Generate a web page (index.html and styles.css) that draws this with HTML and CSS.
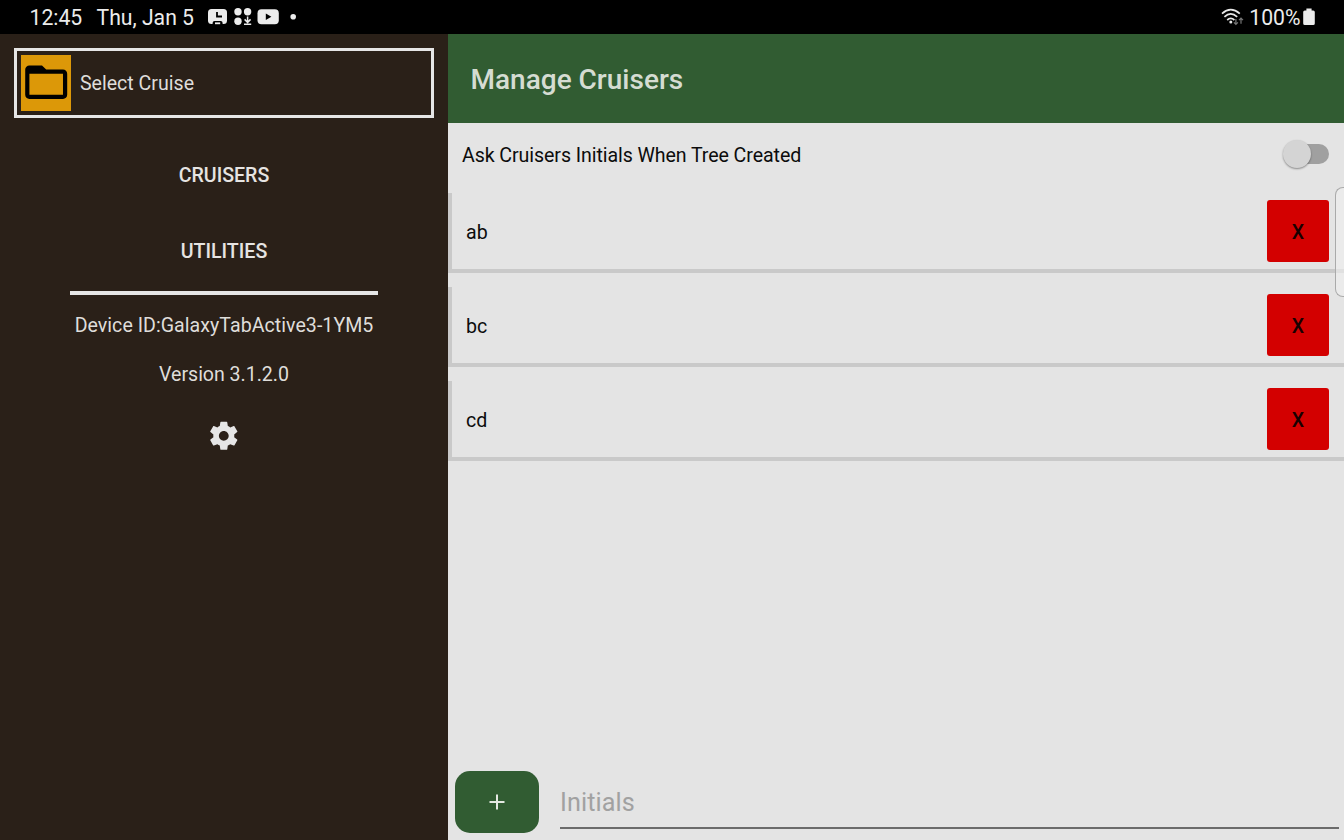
FILE: index.html
```html
<!DOCTYPE html>
<html lang="en">
<head>
<meta charset="utf-8">
<title>Manage Cruisers</title>
<link rel="stylesheet" href="styles.css">
</head>
<body>
<header class="status">
  <span class="clock">12:45</span>
  <span class="date">Thu, Jan 5</span>
  <svg class="notices" width="90" height="18" viewBox="0 0 90 18">
    <rect x="0" y="1" width="19" height="15" rx="3.5" fill="#ececec"/>
    <path d="M9 4v4.5h5" fill="none" stroke="#000" stroke-width="1.8"/>
    <path d="M4.6 16.5v-1.6a2 2 0 0 1 2-2h6a2 2 0 0 1 2 2v1.6z" fill="#000"/>
    <rect x="7" y="14.4" width="5.2" height="1.8" fill="#ececec"/>
    <g fill="#ececec"><circle cx="30" cy="3.8" r="3.7"/><circle cx="39.6" cy="3.8" r="3.7"/><circle cx="30" cy="13.2" r="3.7"/></g>
    <path d="M39.6 8.5v5.5M36.6 11.4l3 3 3-3M36 16.2h7.2" fill="none" stroke="#ececec" stroke-width="1.5"/>
    <rect x="49.5" y="1.2" width="21.3" height="15" rx="4" fill="#ececec"/>
    <path d="M57.8 5.5v6.4l5.6-3.2z" fill="#000"/>
    <circle cx="85.2" cy="8.8" r="2.8" fill="#ececec"/>
  </svg>
  <div class="system">
    <svg width="24" height="18" viewBox="0 0 24 18">
      <g fill="none" stroke="#e8e8e8" stroke-width="1.7">
        <path d="M1 5.600Q9.700-2.200 18.800 5.600"/><path d="M3.400 8.900Q9.700 3 16.200 8.900"/><path d="M6.200 12Q9.700 8.800 13.400 12"/>
      </g>
      <circle cx="9.8" cy="14" r="1.5" fill="#e8e8e8"/>
      <path d="M14.900 11v5.500M12.900 14.400l2 2 2-2M20 15.800v-5.600M18 12.200l2-2 2 2" fill="none" stroke="#777" stroke-width="1.2"/>
    </svg>
    <span class="percent">100%</span>
    <svg width="12" height="18" viewBox="0 0 12 18"><path d="M3.400.5h5.200v2h1.600a1.600 1.600 0 0 1 1.600 1.600v11.300a1.600 1.600 0 0 1-1.600 1.600H1.800a1.600 1.600 0 0 1-1.600-1.600V4.100a1.600 1.600 0 0 1 1.600-1.600h1.600z" fill="#ececec"/></svg>
  </div>
</header>
<div class="app">
  <nav class="drawer">
    <div class="select">
      <span class="folder"><svg width="50.4" height="50.4" viewBox="0 0 24 24"><path d="M20 6h-8l-2-2H4c-1.100 0-1.990.9-1.990 2L2 18c0 1.100.9 2 2 2h16c1.100 0 2-.9 2-2V8c0-1.100-.9-2-2-2zm0 12H4V8h16v10z"/></svg></span>
      <span class="select-label">Select Cruise</span>
    </div>
    <div class="nav-item">CRUISERS</div>
    <div class="nav-item">UTILITIES</div>
    <div class="divider"></div>
    <div class="device">Device ID:GalaxyTabActive3-1YM5</div>
    <div class="version">Version 3.1.2.0</div>
    <svg class="gear" width="33.6" height="33.6" viewBox="0 0 24 24"><path fill="#e6e6e6" d="M19.430 12.980c.04-.32.07-.64.07-.98s-.03-.66-.07-.98l2.110-1.650c.19-.15.24-.42.12-.64l-2-3.460c-.12-.22-.39-.3-.61-.22l-2.490 1c-.52-.4-1.080-.73-1.690-.98l-.38-2.650C14.460 2.180 14.250 2 14 2h-4c-.25 0-.46.18-.49.42l-.38 2.650c-.61.25-1.170.59-1.690.98l-2.490-1c-.23-.09-.49 0-.61.22l-2 3.460c-.13.22-.07.49.12.64l2.110 1.650c-.04.32-.07.65-.07.98s.03.66.07.98l-2.110 1.650c-.19.15-.24.42-.12.64l2 3.460c.12.22.39.3.61.22l2.490-1c.52.4 1.080.73 1.690.98l.38 2.650c.03.24.24.42.49.42h4c.25 0 .46-.18.49-.42l.38-2.650c.61-.25 1.170-.59 1.690-.98l2.490 1c.23.09.49 0 .61-.22l2-3.460c.12-.22.07-.49-.12-.64l-2.110-1.650zM12 15.500c-1.930 0-3.500-1.570-3.500-3.500s1.570-3.500 3.500-3.500 3.500 1.570 3.500 3.500-1.570 3.500-3.500 3.500z"/></svg>
  </nav>
  <main class="page">
    <h1 class="toolbar">Manage Cruisers</h1>
    <div class="setting"><span class="setting-label">Ask Cruisers Initials When Tree Created</span><span class="switch"><span class="thumb"></span></span></div>
    <div class="list">
      <div class="row"><span class="name">ab</span><button class="remove">X</button></div>
      <div class="row"><span class="name">bc</span><button class="remove">X</button></div>
      <div class="row"><span class="name">cd</span><button class="remove">X</button></div>
    </div>
    <div class="entry">
      <button class="add"><svg width="16" height="16" viewBox="0 0 16 16"><path d="M8 .5v15M.5 8h15" stroke="#e4e8e2" stroke-width="2"/></svg></button>
      <div class="field">Initials</div>
    </div>
    <div class="edge-handle"></div>
  </main>
</div>
</body>
</html>
```

FILE: styles.css
```css
* { box-sizing: border-box; }
body {
  margin: 0;
  width: 1344px;
  height: 840px;
  overflow: hidden;
  display: flex;
  flex-direction: column;
  font: 19.6px/24px Roboto, sans-serif;
  background: #e4e4e4;
}
button { border: 0; padding: 0; font: inherit; }
svg { display: block; flex: none; }
.status {
  height: 34px;
  flex: none;
  display: flex;
  align-items: center;
  padding: 0 29px 0 29.500px;
  background: #000;
  color: #ececec;
  font-size: 21.200px;
}
.clock { width: 67px; padding-top: 2px; }
.date { width: 111.500px; padding-top: 2px; white-space: nowrap; }
.system { display: flex; align-items: center; margin-left: auto; }
.percent { margin: 0 2.500px 0 4.500px; padding-top: 2px; }
.app { flex: 1; display: flex; min-height: 0; }
.drawer {
  width: 448px;
  background: #2a2018;
  color: #dfddda;
  display: flex;
  flex-direction: column;
  align-items: center;
  padding-top: 13.600px;
}
.select {
  width: 420px;
  height: 70px;
  border: 3px solid #e6e6e6;
  padding-left: 4px;
  display: flex;
  align-items: center;
  gap: 8.500px;
}
.select-label { padding-top: 3px; }
.folder {
  width: 50.400px;
  height: 56px;
  background: #dc9808;
  display: flex;
  align-items: center;
}
.nav-item {
  height: 76px;
  line-height: 76px;
  font-weight: 500;
  color: #e6e4e2;
}
.select + .nav-item { margin-top: 20.400px; }
.divider { width: 308px; height: 4.300px; margin-top: 1px; background: #e6e6e6; }
.device { margin-top: 18.700px; letter-spacing: .03px; }
.version { margin-top: 25px; letter-spacing: -.04px; }
.gear { margin-top: 31.700px; }
.page {
  position: relative;
  flex: 1;
  display: flex;
  flex-direction: column;
  color: #0c0c0c;
}
.toolbar {
  margin: 0;
  height: 89px;
  padding: 3.500px 0 0 22.500px;
  display: flex;
  align-items: center;
  background: #315c32;
  color: #d5dcd2;
  font-size: 28px;
  font-weight: 500;
}
.setting {
  height: 62px;
  padding: 0 15px 0 14px;
  display: flex;
  align-items: center;
  justify-content: space-between;
}
.setting-label { padding-top: 4px; letter-spacing: -.08px; }
.switch { width: 42px; height: 20px; border-radius: 10px; background: #a0a0a0; }
.thumb {
  display: block;
  width: 28px;
  height: 28px;
  margin: -4px 0 0 -4px;
  border-radius: 50%;
  background: #d4d4d4;
  box-shadow: 0 1px 2px rgba(0, 0, 0, .4);
}
.list { margin-top: 8px; display: flex; flex-direction: column; gap: 13.800px; }
.row {
  height: 80px;
  border-left: 4px solid #c9c9c9;
  border-bottom: 4px solid #c9c9c9;
  padding: 0 15px 0 14px;
  display: flex;
  align-items: center;
  justify-content: space-between;
}
.name { padding-top: 4px; }
.remove {
  width: 62px;
  height: 62px;
  padding-top: 4px;
  border-radius: 3px;
  background: #d30000;
  color: #180000;
  font-weight: 500;
}
.entry { margin-top: auto; padding: 0 5px 7px 7px; display: flex; gap: 21px; }
.add {
  width: 84px;
  height: 62px;
  display: flex;
  align-items: center;
  justify-content: center;
  border-radius: 15px;
  background: #315c32;
}
.field {
  flex: 1;
  height: 58px;
  border-bottom: 2px solid #6b6b6b;
  line-height: 64px;
  font-size: 25.200px;
  letter-spacing: .1px;
  color: #a1a1a1;
}
/* System edge panel grip, floating over the list */
.edge-handle {
  position: absolute;
  right: 0;
  top: 153px;
  width: 9px;
  height: 110px;
  border: 1.500px solid #aaa;
  border-right: 0;
  border-radius: 8px 0 0 8px;
  background: rgba(240, 240, 240, .6);
}
```
